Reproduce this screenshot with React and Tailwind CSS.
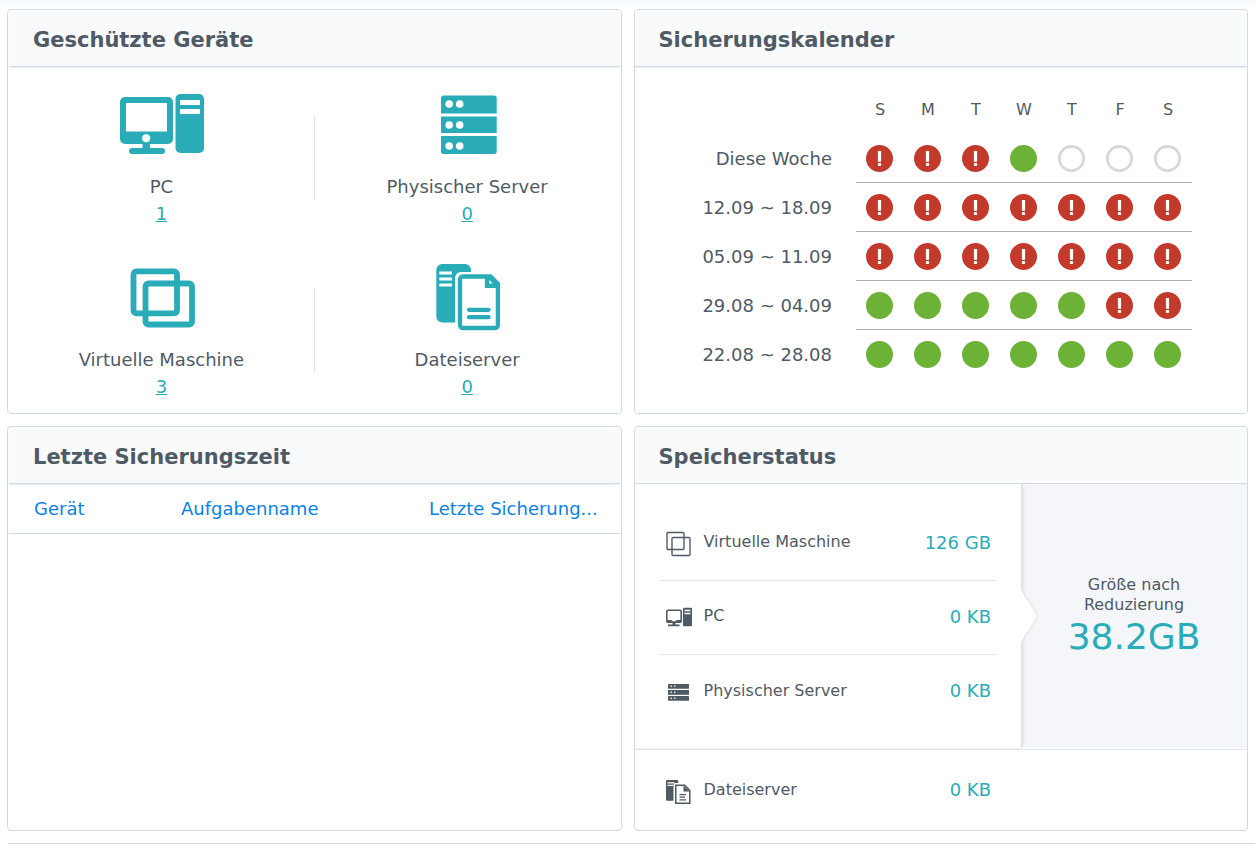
import clsx from 'clsx'

const weekdays = ['S', 'M', 'T', 'W', 'T', 'F', 'S']

const weeks = [
    { label: 'Diese Woche', days: ['error', 'error', 'error', 'ok', 'none', 'none', 'none'] },
    { label: '12.09 ~ 18.09', days: ['error', 'error', 'error', 'error', 'error', 'error', 'error'] },
    { label: '05.09 ~ 11.09', days: ['error', 'error', 'error', 'error', 'error', 'error', 'error'] },
    { label: '29.08 ~ 04.09', days: ['ok', 'ok', 'ok', 'ok', 'ok', 'error', 'error'] },
    { label: '22.08 ~ 28.08', days: ['ok', 'ok', 'ok', 'ok', 'ok', 'ok', 'ok'] },
]

const statusText = { ok: 'Erfolgreich', error: 'Fehler', none: 'Keine Sicherung' }

/* Large device icons */
function PcIcon() {
    return (
        <svg width="94" height="72" viewBox="0 0 94 72" fill="currentColor" aria-hidden="true">
            <rect x="6" y="9" width="53" height="47" rx="5" />
            <rect x="12" y="15" width="41" height="28.5" fill="#fff" />
            <rect x="28.5" y="54" width="7.5" height="8" />
            <circle cx="32.2" cy="50.3" r="4" fill="#fff" />
            <rect x="15" y="60" width="36" height="6" rx="3" />
            <rect x="61.5" y="6" width="28.5" height="59" rx="5" />
            <path d="M66 12h20v5H66zM66 21h20v5H66z" fill="#fff" />
        </svg>
    )
}

function ServerIcon() {
    return (
        <svg width="94" height="72" viewBox="0 0 94 72" fill="currentColor" aria-hidden="true">
            <path d="M21 25.5V10a2.5 2.5 0 0 1 2.5-2.5h50.7a2.5 2.5 0 0 1 2.5 2.5v15.5z" />
            <path d="M21 28.5h55.7V45H21z" />
            <path d="M21 48h55.7v15.5a2.5 2.5 0 0 1-2.5 2.5H23.5a2.5 2.5 0 0 1-2.5-2.5z" />
            <g fill="#fff">
                {[16, 37, 58].map((y) => (
                    <g key={y}>
                        <circle cx="29.2" cy={y} r="3.8" />
                        <circle cx="39.7" cy={y} r="3.8" />
                    </g>
                ))}
            </g>
        </svg>
    )
}

function VmIcon() {
    return (
        <svg width="94" height="72" viewBox="0 0 94 72" fill="none" stroke="currentColor" strokeWidth="5.8" aria-hidden="true">
            <rect x="19.5" y="10.3" width="43.5" height="42" rx="3" />
            <rect x="31.5" y="22.5" width="46.5" height="41" rx="3" />
        </svg>
    )
}

function FileServerIcon() {
    return (
        <svg width="94" height="72" viewBox="0 0 94 72" fill="none" aria-hidden="true">
            <path d="M22.3 3H45a6 6 0 0 1 6 6v2H41a6 6 0 0 0-6 6v44.5H22.3a6 6 0 0 1-6-6V9a6 6 0 0 1 6-6z" fill="currentColor" />
            <path d="M19.3 10.4H32v3.2H19.3zM19.3 16.4H32v3.2H19.3zM19.3 22.4H32v3.2H19.3z" fill="#fff" />
            <g stroke="currentColor" strokeWidth="4.3">
                <path d="M43 15.5h27.5l7.4 7.4V64a3 3 0 0 1-3 3H43a3 3 0 0 1-3-3V18.5a3 3 0 0 1 3-3z" />
                <path d="M67 15.5v9.4h11" />
                <path d="M49 48.8h19.6M49 56.2h19.6" strokeLinecap="round" />
            </g>
            <path d="M69 17h4l5 6v2h-9z" fill="currentColor" />
            <path d="M69.3 19l3.4 3.6h-3.4z" fill="#fff" />
        </svg>
    )
}

/* Small icons of the storage list */
function SmallVmIcon() {
    return (
        <svg width="28" height="28" viewBox="0 0 28 28" fill="none" stroke="currentColor" strokeWidth="1.4" aria-hidden="true">
            <rect x="2" y="2.5" width="17" height="17" rx="1" />
            <rect x="7" y="7.5" width="18" height="18" rx="1" />
        </svg>
    )
}

function SmallPcIcon() {
    return (
        <svg width="28" height="28" viewBox="0 0 28 28" fill="currentColor" aria-hidden="true">
            <rect x="1.8" y="6.3" width="14.4" height="12" rx="1.2" fill="none" stroke="currentColor" strokeWidth="1.6" />
            <path d="M2 16h4.5l.8 1.5h3.4l.8-1.5H16v3H2zM7.5 18.5h3v2h4v1.8H3v-1.8h4.5z" />
            <rect x="18" y="3.8" width="9" height="18.4" rx="1" />
            <path d="M19.5 5.8h6v1.4h-6zM19.5 8.8h6v1.4h-6z" fill="#fff" />
        </svg>
    )
}

function SmallServerIcon() {
    return (
        <svg width="28" height="28" viewBox="0 0 28 28" fill="currentColor" aria-hidden="true">
            <rect x="3" y="5" width="21" height="4.8" rx="0.6" />
            <rect x="3" y="11" width="21" height="4.8" />
            <rect x="3" y="17" width="21" height="4.8" rx="0.6" />
            <path d="M5.5 6.5h1.5v1.5H5.5zM9 6.5h1.5v1.5H9zM5.5 12.5h1.5V14H5.5zM9 12.5h1.5V14H9zM5.5 18.5h1.5V20H5.5zM9 18.5h1.5V20H9z" fill="#fff" fillOpacity="0.8" />
        </svg>
    )
}

function SmallFileServerIcon() {
    return (
        <svg width="28" height="28" viewBox="0 0 28 28" aria-hidden="true">
            <path d="M2 2h10a1.3 1.3 0 0 1 1.3 1.3V5H10a1.5 1.5 0 0 0-1.5 1.5v16.2H2a1 1 0 0 1-1-1V3a1 1 0 0 1 1-1z" fill="currentColor" />
            <path d="M2.5 4.2h7v1.2h-7zM2.5 6.8h5.5V8H2.5z" fill="#fff" />
            <path d="M10.8 7.3h9l5 5.2v12.7h-14z" fill="#fff" stroke="currentColor" strokeWidth="1.5" />
            <path d="M18.5 7.5l6.2 6h-6.2z" fill="currentColor" />
            <path d="M14.5 16.6h6.5M14.5 19.2h5.5M14.5 21.8h6.5" stroke="currentColor" strokeWidth="1.2" />
        </svg>
    )
}

const devices = [
    [
        { name: 'PC', count: 1, Icon: PcIcon },
        { name: 'Physischer Server', count: 0, Icon: ServerIcon },
    ],
    [
        { name: 'Virtuelle Maschine', count: 3, Icon: VmIcon },
        { name: 'Dateiserver', count: 0, Icon: FileServerIcon },
    ],
]

const reducedStorage = [
    { name: 'Virtuelle Maschine', size: '126 GB', Icon: SmallVmIcon },
    { name: 'PC', size: '0 KB', Icon: SmallPcIcon },
    { name: 'Physischer Server', size: '0 KB', Icon: SmallServerIcon },
]

function Panel({ title, className, children }) {
    return (
        <section className={clsx('flex flex-col rounded border border-[#d0dae5] bg-white pt-[2px]', className)}>
            <header className="flex h-[55px] shrink-0 items-center border-b border-[#d0dae5] bg-[#f8fafc] px-6 pt-[3px] shadow-[0_1px_0_#ebf0f5]">
                <h2 className="text-[21px] font-bold">{title}</h2>
            </header>
            {children}
        </section>
    )
}

function Device({ name, count, Icon }) {
    return (
        <div className="flex flex-col items-center text-[18px] leading-[27px]">
            <span className="mb-[13px] text-[#2aacb8]"><Icon /></span>
            <span>{name}</span>
            <a href="#devices" aria-label={`${name}: ${count}`} className="text-[#2aacb8] underline">{count}</a>
        </div>
    )
}

function StatusDot({ status }) {
    return (
        <svg width="27" height="27" viewBox="0 0 27 27" role="img" aria-label={statusText[status]} className="block">
            {status === 'ok' && <circle cx="13.5" cy="13.5" r="13.5" fill="#6cb236" />}
            {status === 'none' && <circle cx="13.5" cy="13.5" r="12.1" fill="#fff" stroke="#d6d6d6" strokeWidth="2.7" />}
            {status === 'error' && (
                <>
                    <circle cx="13.5" cy="13.5" r="13.5" fill="#c3392b" />
                    <rect x="11.9" y="6" width="3.2" height="10.8" rx="0.5" fill="#fff" />
                    <rect x="11.9" y="18" width="3.2" height="3" rx="0.8" fill="#fff" />
                </>
            )}
        </svg>
    )
}

function StorageRow({ name, size, Icon, className }) {
    return (
        <li className={clsx('flex items-center px-[6px]', className)}>
            <span className="mt-1 mr-[11px]"><Icon /></span>
            <span className="flex-1 text-[16px]">{name}</span>
            <span className="text-[18px] text-[#2aacb8]">{size}</span>
        </li>
    )
}

export default function App() {
    return (
        <div className="min-h-screen bg-white font-['DejaVu_Sans',Verdana,sans-serif] text-[#505a64]">
            <div className="h-[9px] bg-linear-to-b from-[#f5f8fb] to-white" />
            <main className="grid grid-cols-2 gap-3 px-[7px]">
                <Panel title="Geschützte Geräte" className="px-px">
                    <div className="flex flex-col gap-[34px] pt-[21px] pb-[13px]">
                        {devices.map(([left, right]) => (
                            <div key={left.name} className="grid grid-cols-[1fr_1px_1fr]">
                                <Device {...left} />
                                <div className="h-[85px] self-center bg-[#e1e4e8]" />
                                <Device {...right} />
                            </div>
                        ))}
                    </div>
                </Panel>

                <Panel title="Sicherungskalender">
                    <div className="flex justify-end pt-[19px] pr-[55px]">
                        <table className="border-separate border-spacing-0">
                            <thead>
                                <tr className="h-12 text-[16px]">
                                    <td />
                                    {weekdays.map((day, i) => (
                                        <th key={i} scope="col" className="w-12 font-normal">{day}</th>
                                    ))}
                                </tr>
                            </thead>
                            <tbody>
                                {weeks.map((week, i) => (
                                    <tr key={week.label} className="h-[49px]">
                                        <th scope="row" className="pr-6 text-right text-[18px] font-normal">{week.label}</th>
                                        {week.days.map((status, j) => (
                                            <td key={j} className={clsx('w-12 pl-[10px]', i < weeks.length - 1 && 'border-b border-[#adadad]')}>
                                                <StatusDot status={status} />
                                            </td>
                                        ))}
                                    </tr>
                                ))}
                            </tbody>
                        </table>
                    </div>
                </Panel>

                <Panel title="Letzte Sicherungszeit" className="px-px">
                    <table className="w-full table-fixed border-separate border-spacing-0 text-left text-[18px] text-[#0a82e6]">
                        <thead>
                            <tr className="h-[50px]">
                                <th scope="col" className="w-[147px] border-b border-[#d0dae5] pl-[25px] font-normal">Gerät</th>
                                <th scope="col" className="w-[248px] border-b border-[#d0dae5] pl-[25px] font-normal">Aufgabenname</th>
                                <th scope="col" className="border-b border-[#d0dae5] pl-[25px] font-normal whitespace-nowrap">Letzte Sicherung...</th>
                            </tr>
                        </thead>
                    </table>
                </Panel>

                <Panel title="Speicherstatus">
                    <div className="flex overflow-hidden border-b border-[#e1e4e8] pb-px">
                        <div className="relative z-10 flex-1 bg-white px-6 pt-[23px] pb-[19px] shadow-[1px_0_4px_rgba(60,70,80,0.2)]">
                            <ul>
                                {reducedStorage.map((item, i) => (
                                    <StorageRow
                                        key={item.name}
                                        {...item}
                                        className={clsx('h-[74px] pb-[3px]', i < reducedStorage.length - 1 && 'border-b border-[#e1e4e8]')}
                                    />
                                ))}
                            </ul>
                            {/* Arrow pointing at the reduced size */}
                            <svg
                                width="22"
                                height="60"
                                viewBox="0 0 22 60"
                                className="absolute top-1/2 left-full -translate-y-1/2 drop-shadow-[1px_0_1px_rgba(60,70,80,0.12)]"
                                aria-hidden="true"
                            >
                                <path d="M-1 4h1l16 26L0 56h-1z" fill="#fff" />
                            </svg>
                        </div>
                        <div className="flex w-[226px] flex-col items-center justify-center bg-[#f5f6fa] pt-[2px] text-center">
                            <p className="w-32 text-[16px] leading-5">Größe nach Reduzierung</p>
                            <p className="text-[36px] leading-[44px] text-[#2aacb8]">38.2GB</p>
                        </div>
                    </div>
                    <div className="flex">
                        <ul className="flex-1 px-6">
                            <StorageRow name="Dateiserver" size="0 KB" Icon={SmallFileServerIcon} className="h-20 pb-px" />
                        </ul>
                        <div className="w-[226px]" />
                    </div>
                </Panel>
            </main>
            <div className="mt-3 ml-[9px] border-t border-[#d0dae5]" />
        </div>
    )
}
